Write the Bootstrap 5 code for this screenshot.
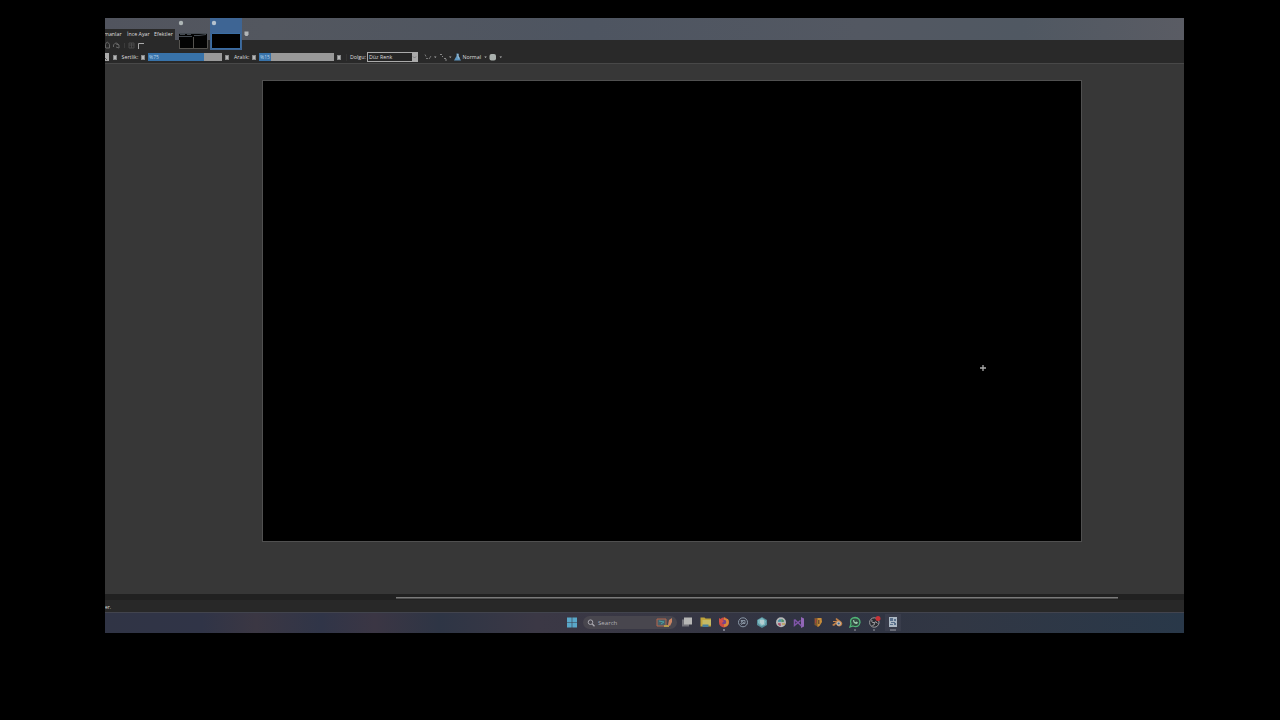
<!DOCTYPE html>
<html lang="tr">
<head>
<meta charset="utf-8">
<meta name="viewport" content="width=device-width, initial-scale=1">
<title>Paint</title>
<link href="https://cdn.jsdelivr.net/npm/bootstrap@5.3.0/dist/css/bootstrap.min.css" rel="stylesheet">
<style>
body{background:#000;height:720px;overflow:hidden;font:5.3px/8px "Open Sans","Noto Sans",sans-serif;color:#dedede}
svg{display:block;flex:none}
.desktop{width:1079px;height:614.5px;margin:18px 0 0 105px;background:#373737}
.app-head{height:46px;background:#292929;border-bottom:1px solid #484848}
.title-strip{height:22px;background:linear-gradient(90deg,#51545e,#53575f 15%,#4e5561 45%,#535862 70%,#505862 85%,#5a5c64)}
.menu-row{width:70px;height:11px;background:#292929;line-height:10px}
.menu-row span,.brush-row span{display:block;flex:none;white-space:nowrap}
.menu-row span{margin-top:-1px}
.quick-row{height:11px}
.brush-row{height:12px}
.w-menu1{width:22px}.w-menu2{width:27px}
.lbl-s{width:20px}.lbl-a{width:18px}
.step{width:4px;height:5px;background:#b8b8b8;border:1px solid #87898a}
.meter{width:74px;height:8px;background:#999;color:#bdd6ea;line-height:8px}
.meter i{display:block;height:8px;background:#3873aa;font-style:normal;padding-left:1px;font-size:5px}
.fill-box{width:51px;height:10px;border:1px solid #aaa;background:#252525;line-height:8px;padding-left:1px}
.fill-box b{width:5px;height:8px;background:#aaa}
.doc-tabs{left:72px;top:0}
.doc{width:32px;height:32px}
.doc.on{background:#3e6594}
.doc svg{margin-left:1px}
.work{height:530px;padding:16px 0 0 157px}
.sheet{width:820px;height:462px;background:#000;border:1px solid #505050}
.cross{left:717px;top:284px}
.scroll-strip{height:6px;background:#212121;padding:3px 0 0 290.5px}
.thumb-bar{width:722.5px;height:2px;background:#7a7a7a;border-bottom:1px solid #4e4e4e}
.status-row{height:12px;background:#282828;line-height:14px;font-size:5px}
.tasks{height:20.5px;border-top:1px solid #42444e;padding-left:461px;background:linear-gradient(90deg,#303445,#303447 9%,#3b3743 14%,#303548 20%,#3b3644 25%,#2e3545 31%,#3b3845 40%,#373744 52%,#303342 65%,#313744 79%,#293849)}
.search-pill{width:94px;height:13px;border-radius:7px;background:#48464e;margin-left:5px;padding:0 4px 0 4px;font-size:6.1px;line-height:12px;color:#b2b1b6}
.app-icons{margin-left:2px}
.app-icons .slot{width:18.72px;height:19px}
</style>
</head>
<body>
<div class="desktop position-relative overflow-hidden d-flex flex-column">
  <header class="app-head position-relative flex-shrink-0">
    <div class="title-strip d-flex align-items-end">
      <nav class="menu-row d-flex align-items-center overflow-hidden">
        <span class="w-menu1" style="text-indent:-1px">manlar</span><span class="w-menu2">İnce Ayar</span><span>Efektler</span>
      </nav>
    </div>
    <div class="quick-row">
      <svg width="42" height="11" fill="none" stroke="#666"><path d="M.5 8V4.500Q2-.2 4.500 4.500V8H1M8.500 7V5Q11 1 14 5L11 4M14 5V8L11 7"/><path d="M19.500 3V8" stroke="#3b3b3b"/><path d="M24 3h5v5h-5zM24 5h5M26.500 3v5" stroke="#4b4b4b"/><path d="M33.500 9V3.500H39" stroke="#aaa"/></svg>
    </div>
    <div class="brush-row d-flex align-items-center">
      <span style="width:5px"><svg width="4" height="8"><path d="M0 0h4v8H0z" fill="#aaa"/><path d="M0 5l2 2" stroke="#555"/></svg></span>
      <span class="step" style="margin-left:3px"></span>
      <span class="lbl-s" style="margin-left:4.500px;margin-right:-.5px">Sertlik:</span><span class="step"></span>
      <div class="meter" style="margin-left:3px"><i style="width:56px">%75</i></div>
      <span class="step" style="margin-left:3px"></span>
      <span class="lbl-a" style="margin-left:5px">Aralık:</span><span class="step"></span>
      <div class="meter" style="margin-left:3px;width:75px"><i style="width:12px">%15</i></div>
      <span class="step" style="margin-left:2.500px"></span>
      <span style="width:1px;height:7px;background:#333;margin-left:5px"></span>
      <span style="width:17px;margin-left:3.500px">Dolgu:</span>
      <div class="fill-box d-flex justify-content-between"><span>Düz Renk</span><b><svg width="5" height="8"><path d="M1 3.500l1.500 1.500 1.500-1.500" fill="none" stroke="#777"/></svg></b></div>
      <svg class="ms-1" width="36" height="10" fill="none" stroke="#969696"><path d="M3 2.500l1 2M4 6.500h2M7 7l2-3" stroke="#777"/><path d="M18 2.500h2M20 4l1 1M22 6.500h2M24 7v2" stroke="#888"/><path d="M12 4.500h2.500l-1.200 1.500zM27 4.500h2.500l-1.200 1.500z" fill="#aaa" stroke="none"/></svg>
      <svg width="7" height="10" style="margin-left:-4px"><path d="M2.500 1.500h2v2.500l2.500 4.500h-7l2.500-4.500z" fill="#5f96c0"/><path d="M3 2h1.500v2L6 6.500H4z" fill="#9abbd2"/></svg>
      <span style="margin-left:1.500px;width:21.500px">Normal</span>
      <svg width="22" height="10"><path d="M.3 4.500h2.500L1.600 6zM15.500 4.500h2.500l-1.200 1.500z" fill="#bbb"/><rect x="5.500" y="2" width="6.500" height="6.500" rx="2" fill="#aab1ae"/></svg>
    </div>
    <div class="doc-tabs position-absolute d-flex">
      <div class="doc"><svg width="32" height="32"><circle cx="3" cy="5" r="2.200" fill="#aeb6b6"/><path d="M1 15h28v16H1z" fill="#030303"/><path d="M1 30.500H29.500V22M1.500 22v8M15.500 19v11" fill="none" stroke="#55534f"/><path d="M1 18.500h13M16 17.500h5l7-1M2 16.500h5M9 16.500h4M1 15.500h28" fill="none" stroke="#434950"/></svg></div>
      <div class="doc on" style="margin-left:1px"><svg width="31" height="32"><circle cx="3" cy="5" r="2.200" fill="#b5c2ce"/><path d="M.5 15.500h29v15H.5z" fill="#000" stroke="#3a6da3"/></svg></div>
      <svg width="8" height="22"><path d="M2.500 13.500h4v3l-1 1.500h-2l-1-1.500z" fill="#b2b6b8"/></svg>
    </div>
  </header>
  <main class="work flex-shrink-0">
    <div class="sheet position-relative"><svg class="cross position-absolute" width="7" height="7"><path d="M3 0v6M0 3h6" stroke="#aaa" stroke-width="1.300"/></svg></div>
  </main>
  <div class="scroll-strip flex-shrink-0"><div class="thumb-bar"></div></div>
  <div class="status-row flex-shrink-0">er.</div>
  <footer class="tasks flex-shrink-0 d-flex align-items-center">
    <svg width="12" height="12" fill="#59a7c8"><path d="M1 .5h4.700v4.700H1zM6.300 .5H11v4.700H6.300zM1 5.800h4.700v4.700H1zM6.300 5.800H11v4.700H6.300z"/></svg>
    <div class="search-pill d-flex align-items-center">
      <svg width="8" height="8" fill="none" stroke="#aaa9b0"><circle cx="3.500" cy="3.200" r="2.300"/><path d="M5.300 5L7.500 7.200" stroke-width="1.300"/></svg>
      <span class="me-auto" style="margin-left:3px">Search</span>
      <svg width="17" height="11"><path d="M1 2h9v7H1z" fill="#46616a" stroke="#b6654a"/><path d="M3 4l5 1-3 2" fill="none" stroke="#4d9fa1"/><path d="M8 8h5v2H8z" fill="#b49a4c"/><path d="M12 8l1-5 3-2v4l-2 4z" fill="#c88362"/></svg>
    </div>
    <div class="app-icons d-flex">
      <div class="slot"><svg width="18" height="19"><path d="M3 6.500h7v7H3z" fill="#73737a"/><path d="M5 4.500h8v7H5z" fill="#b6b6b5"/></svg></div>
      <div class="slot"><svg width="18" height="19"><path d="M2.500 4.500h4l1 1h5.500v8H2.500z" fill="#bea33c"/><path d="M4.500 7h8.500v5H4.500z" fill="#c4b965"/><path d="M4.500 11.500h6v2.500h-6z" fill="#477f9b"/></svg></div>
      <div class="slot"><svg width="18" height="19"><circle cx="8" cy="9.500" r="5" fill="#cc4b43"/><path d="M8 4l2 2 2 0q2 4-1 7l-3 1z" fill="#d58b39"/><circle cx="8" cy="9" r="2.300" fill="#75448c"/><path d="M3 5l3 2 2 1-2 2-3-1z" fill="#d35147"/><circle cx="8" cy="17" r=".9" fill="#a0a2ad"/></svg></div>
      <div class="slot"><svg width="18" height="19" fill="none" stroke="#8b98a7"><circle cx="8" cy="9.300" r="4.500"/><path d="M6 7.500h4v3H7zM6 7.500l4 3M5.500 10l1.500 2" stroke-width=".9"/></svg></div>
      <div class="slot"><svg width="18" height="19"><path d="M8 4l5 3v5l-5 3-5-3V7z" fill="#568e9b"/><path d="M8 5l4 3-1 4-4 1-3-3V7z" fill="#80bac1"/><path d="M6 7h4v4l-2 1-2-2z" fill="#b4cdd1"/></svg></div>
      <div class="slot"><svg width="18" height="19"><circle cx="8" cy="9.300" r="5" fill="#b6b6b7"/><path d="M5 8h3M7 6v2" stroke="#3a8da6" stroke-width="1.300"/><path d="M9 6v3M11 8H9" stroke="#438c61" stroke-width="1.300"/><path d="M5 11h2v2" fill="none" stroke="#a74362" stroke-width="1.300"/><path d="M9 11h3" stroke="#c29b45" stroke-width="1.300"/></svg></div>
      <div class="slot"><svg width="18" height="19"><path d="M10 4l3 1.500v8L10 15z" fill="#9166b6"/><path d="M3.500 6.500v6l6-5M3.500 6.500l7 6.500" fill="none" stroke="#7f55a8" stroke-width="1.500"/></svg></div>
      <div class="slot"><svg width="18" height="19"><path d="M4.500 5h4v9L4.500 12z" fill="#7d582e"/><path d="M7.500 5h4l.5 4-2.500 4-2 1z" fill="#c68b39"/><path d="M5.500 6v4" stroke="#a5423f"/><path d="M8 7h1.500v4H8z" fill="#6b5032"/></svg></div>
      <div class="slot"><svg width="18" height="19"><path d="M3 12l4-3H4V8h4L6.500 6l1-1 4 3q3 2 1 4.500Q9 15 7 11l-2 2z" fill="#c18148"/><circle cx="9.700" cy="10.500" r="2.200" fill="#c3b8b0"/><circle cx="9.700" cy="10.500" r="1.100" fill="#35658d"/></svg></div>
      <div class="slot"><svg width="18" height="19"><path d="M3 14l1-3q-2-6 4-6.500Q13 5 13 9.500 12 15 6 13z" fill="#344843" stroke="#50b577" stroke-width="1.300"/><path d="M6 7q0 4 4 4l1-1.500-1.500-1-1 .8L7 8l.5-1z" fill="#9dccad"/><path d="M7 17h2" stroke="#999ba4"/></svg></div>
      <div class="slot"><svg width="18" height="19"><circle cx="8.300" cy="9.500" r="4.700" fill="#292a30" stroke="#a0a0a3"/><path d="M8.300 9.500Q5 10 6 7M8.300 9.500q2-2 3 1M8.300 9.500q1 3-2 3" fill="none" stroke="#a2a2a6"/><circle cx="12" cy="5.500" r="2.500" fill="#c73337"/><path d="M7 17h2" stroke="#999ba4"/></svg></div>
      <div class="slot"><svg width="18" height="19"><path d="M0 1h16v17H0z" fill="#454957" opacity=".4"/><path d="M4 4h8v10H4z" fill="#acb8c4"/><path d="M5 5h3v3H5zM9 6h2v2H9zM6 9h4v1H6zM5 11h3v1H5zM9 10h2v2H9z" fill="#596f8b"/><path d="M5 17h6" stroke="#999ba4"/></svg></div>
    </div>
  </footer>
</div>
<script src="https://cdn.jsdelivr.net/npm/bootstrap@5.3.0/dist/js/bootstrap.bundle.min.js"></script>
</body>
</html>
